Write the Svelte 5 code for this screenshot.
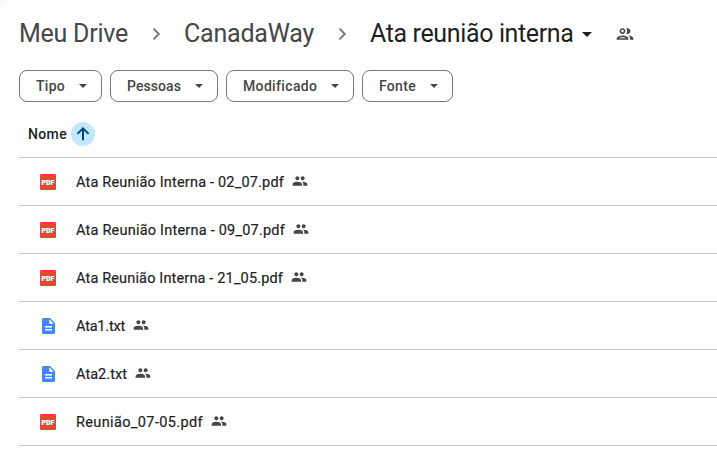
<script>
  const chips = [
    { label: 'Tipo', width: 83, text: 29 },
    { label: 'Pessoas', width: 108, text: 54 },
    { label: 'Modificado', width: 128, text: 74 },
    { label: 'Fonte', width: 91, text: 37 }
  ];

  const files = [
    { name: 'Ata Reunião Interna - 02_07.pdf', kind: 'pdf', text: 208 },
    { name: 'Ata Reunião Interna - 09_07.pdf', kind: 'pdf', text: 209 },
    { name: 'Ata Reunião Interna - 21_05.pdf', kind: 'pdf', text: 207 },
    { name: 'Ata1.txt', kind: 'doc', text: 49 },
    { name: 'Ata2.txt', kind: 'doc', text: 51 },
    { name: 'Reunião_07-05.pdf', kind: 'pdf', text: 127 }
  ];

  // Spreads the tracking of a label so that it fills the given width.
  function fit(node, width) {
    const natural = node.getBoundingClientRect().width;
    const count = node.textContent.length;
    node.style.letterSpacing = `${(width - natural) / count}px`;
  }
</script>

{#snippet chevron()}
  <svg class="chevron" width="24" height="24" viewBox="0 0 24 24"><path d="M9.500 6.700 14.800 12l-5.300 5.300" /></svg>
{/snippet}

<div class="backdrop">
  <main>
    <nav>
      <span class="crumb" use:fit={109}>Meu Drive</span>
      {@render chevron()}
      <span class="crumb" use:fit={130}>CanadaWay</span>
      {@render chevron()}
      <span class="crumb current" use:fit={203.5}>Ata reunião interna</span>
      <svg class="caret" width="10" height="5" viewBox="0 0 10 5"><path d="M0 0h10L5 5z" /></svg>
      <svg class="shared" width="20" height="20" viewBox="0 0 24 24"><path d="M9 13.75c-2.34 0-7 1.17-7 3.5V19h14v-1.75c0-2.33-4.66-3.5-7-3.5zM4.34 17c.84-.58 2.87-1.25 4.66-1.25s3.82.67 4.66 1.25H4.34zM9 12c1.93 0 3.5-1.57 3.5-3.5S10.930 5 9 5 5.500 6.570 5.500 8.500 7.070 12 9 12zm0-5c.83 0 1.500.67 1.500 1.500S9.830 10 9 10s-1.500-.67-1.500-1.500S8.170 7 9 7zm7.040 6.810c1.160.84 1.960 1.960 1.960 3.440V19h4v-1.750c0-2.020-3.500-3.170-5.960-3.440zM15 12c1.930 0 3.500-1.570 3.500-3.500S16.930 5 15 5c-.54 0-1.040.13-1.500.35.63.89 1 1.980 1 3.150s-.37 2.260-1 3.150c.46.22.96.35 1.500.35z" /></svg>
    </nav>

    <div class="chips">
      {#each chips as chip}
        <button style:width="{chip.width}px">
          <span use:fit={chip.text}>{chip.label}</span>
          <svg width="8" height="4" viewBox="0 0 8 4"><path d="M0 0h8L4 4z" /></svg>
        </button>
      {/each}
    </div>

    <div class="table">
      <div class="head">
        <span use:fit={39}>Nome</span>
        <div class="sort">
          <svg width="18" height="18" viewBox="0 0 18 18"><path d="M9 15.200V3.300M3.400 8.900 9 3.300l5.600 5.600" /></svg>
        </div>
      </div>
      {#each files as file}
        <div class="row">
          {#if file.kind === 'pdf'}
            <svg class="type" width="16" height="16" viewBox="0 0 16 16">
              <rect width="16" height="16" rx="1.300" fill="#ea4335" />
              <text x="8" y="10.700" text-anchor="middle" textLength="12.800" lengthAdjust="spacingAndGlyphs">PDF</text>
            </svg>
          {:else}
            <svg class="type" width="16" height="16" viewBox="0 0 16 16">
              <path fill="#4285f4" d="M3.500 0H10l5 5v9.500a1.500 1.500 0 0 1-1.500 1.500h-10A1.500 1.500 0 0 1 2 14.500v-13A1.500 1.500 0 0 1 3.500 0z" />
              <path fill="#fff" d="M9.300 1.300V5.700h4.400zM5 8h7v1.400H5zM5 11h7v1.400H5z" />
            </svg>
          {/if}
          <span class="name" use:fit={file.text}>{file.name}</span>
          <svg class="people" width="16" height="16" viewBox="0 0 24 24"><path d="M16 11c1.660 0 2.990-1.340 2.990-3S17.660 5 16 5s-3 1.340-3 3 1.340 3 3 3zm-8 0c1.660 0 2.990-1.340 2.990-3S9.660 5 8 5 5 6.340 5 8s1.340 3 3 3zm0 2c-2.330 0-7 1.170-7 3.500V19h14v-2.500c0-2.330-4.670-3.500-7-3.500zm8 0c-.29 0-.62.02-.97.05 1.160.84 1.970 1.970 1.970 3.450V19h6v-2.500c0-2.330-4.670-3.500-7-3.500z" /></svg>
        </div>
      {/each}
    </div>
  </main>
</div>

<style>
  .backdrop {
    background: #f8fafd;
    height: 467px;
    overflow: hidden;
    font-family: Roboto, "Liberation Sans", sans-serif;
  }
  main {
    box-sizing: border-box;
    height: 100%;
    padding-left: 19px;
    background: #fff;
    border-top-left-radius: 16px;
  }
  svg {
    display: block;
    flex: none;
  }
  span {
    white-space: pre;
    flex: none;
  }
  nav {
    display: flex;
    align-items: center;
    height: 68px;
    color: #444746;
  }
  .crumb {
    font-size: 25px;
    line-height: 32px;
  }
  .current {
    color: #1f1f1f;
  }
  .chevron {
    margin: 0 16px;
    fill: none;
    stroke: #747775;
    stroke-width: 1.9;
  }
  .caret {
    margin: 1px 0 0 8.5px;
    fill: #1f1f1f;
  }
  .shared {
    margin-left: 23px;
    fill: #444746;
  }
  .chips {
    display: flex;
    gap: 8px;
    padding-top: 2px;
  }
  button {
    box-sizing: border-box;
    display: flex;
    align-items: center;
    justify-content: space-between;
    height: 32px;
    padding: 0 14px 0 16px;
    border: 1px solid #747775;
    border-radius: 8px;
    background: #fff;
    color: #444746;
    font: 500 14px/20px Roboto, "Liberation Sans", sans-serif;
  }
  button svg {
    fill: #444746;
  }
  .table {
    margin-top: 8px;
    color: #1f1f1f;
    font-size: 14px;
    font-weight: 500;
    line-height: 20px;
  }
  .head,
  .row {
    box-sizing: border-box;
    display: flex;
    align-items: center;
    height: 48px;
    border-bottom: 1px solid #c7c7c7;
  }
  .head {
    padding-left: 9px;
  }
  .sort {
    display: grid;
    place-items: center;
    width: 24px;
    height: 24px;
    margin-left: 4px;
    border-radius: 50%;
    background: #c2e7ff;
  }
  .sort path {
    fill: none;
    stroke: #004a77;
    stroke-width: 2;
  }
  .row {
    padding-left: 21px;
  }
  .type text {
    fill: #fff;
    stroke: #fff;
    stroke-width: 0.2px;
    font-size: 7.4px;
    font-weight: 900;
  }
  .name {
    margin: 2px 0 0 20px;
    font-size: 14.5px;
    font-weight: 400;
    -webkit-text-stroke: 0.2px #1f1f1f;
  }
  .people {
    margin: 0 0 2px 8px;
    fill: #444746;
  }
</style>
